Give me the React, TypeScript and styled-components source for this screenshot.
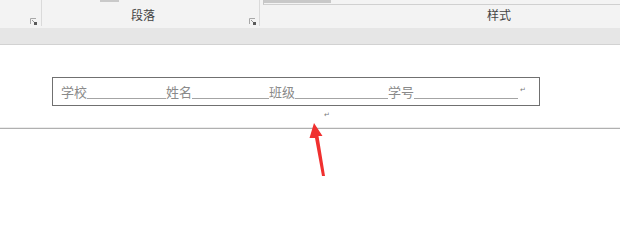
import React from 'react'
import styled, { createGlobalStyle } from 'styled-components'

const GlobalStyle = createGlobalStyle`
  html, body {
    margin: 0;
    padding: 0;
    background: #ffffff;
  }
  body {
    font-family: "Noto Sans CJK SC", "Noto Sans", sans-serif;
  }
`

const Screen = styled.div`
  position: relative;
  width: 620px;
  height: 214px;
  overflow: hidden;
  background: #ffffff;
`

const Ribbon = styled.div`
  display: flex;
  height: 28px;
  background: #f3f3f3;
`

const Group = styled.div<{ width?: number; labelLeft?: number }>`
  position: relative;
  display: flex;
  align-items: flex-end;
  ${({ width }) => (width ? `width: ${width}px;` : 'flex: 1;')}
  padding-left: ${({ labelLeft }) => labelLeft || 0}px;
  box-sizing: border-box;
`

const GroupLabel = styled.span`
  font-size: 12px;
  line-height: 14px;
  color: #444444;
  padding-bottom: 6px;
`

const Separator = styled.div`
  width: 1px;
  height: 26px;
  background: #dadada;
`

const Launcher = styled.svg<{ right: number }>`
  position: absolute;
  right: ${({ right }) => right}px;
  top: 18px;
  width: 7px;
  height: 7px;
`

const ButtonEdge = styled.div`
  position: absolute;
  left: 58px;
  top: 0;
  width: 19px;
  height: 2px;
  background: #c9c9c9;
`

const Gallery = styled.div`
  position: absolute;
  left: 3px;
  right: 0;
  top: 0;
  height: 5px;
  border-left: 1px solid #c6c6c6;
  border-bottom: 1px solid #d0d0d0;
  box-sizing: border-box;
`

const GalleryThumb = styled.div`
  width: 67px;
  height: 3px;
  background: #c8c8c8;
`

const Band = styled.div`
  height: 16px;
  background: #e6e6e6;
  border-bottom: 1px solid #d2d2d2;
`

const Page = styled.div`
  padding-top: 32px;
`

const FieldBox = styled.div`
  margin-left: 52px;
  width: 488px;
  height: 29px;
  border: 1px solid #707070;
  box-sizing: border-box;
  display: flex;
  align-items: center;
  padding-left: 8px;
  padding-top: 1px;
  color: #8a8a8a;
  font-size: 13px;
  line-height: 14px;
`

const Label = styled.span`
  white-space: nowrap;
`

const Blank = styled.span<{ width: number }>`
  display: block;
  width: ${({ width }) => width}px;
  height: 13px;
  border-bottom: 1px solid #a4a4a4;
`

const ReturnMark = styled.span`
  font-family: "DejaVu Sans", sans-serif;
  font-size: 7px;
  color: #7a7a7a;
  margin-left: 2px;
  margin-top: -4px;
`

const MarkRow = styled.div`
  height: 22px;
  display: flex;
  align-items: center;
  padding-left: 322px;
`

const Rule = styled.div`
  height: 1px;
  background: #b0b0b0;
  box-shadow: 0 -1px 0 #ececec;
`

const Arrow = styled.svg`
  position: absolute;
  left: 300px;
  top: 115px;
  width: 30px;
  height: 65px;
`

function DialogLauncher({ right }: { right: number }) {
  return (
    <Launcher right={right} viewBox="0 0 7 7">
      <path d="M0.5 6V0.5H6" fill="none" stroke="#a8a8a8" strokeWidth="1" />
      <path d="M2 2L5 5" stroke="#9a9a9a" strokeWidth="1" />
      <rect x="4" y="4" width="3" height="3" fill="#5a5a5a" />
    </Launcher>
  )
}

const fields: { label: string; blank: number }[] = [
  { label: '学校', blank: 79 },
  { label: '姓名', blank: 77 },
  { label: '班级', blank: 93 },
  { label: '学号', blank: 104 },
]

export default function App() {
  return (
    <Screen>
      <GlobalStyle />
      <Ribbon>
        <Group width={41}>
          <DialogLauncher right={4} />
        </Group>
        <Separator />
        <Group width={217} labelLeft={89}>
          <ButtonEdge />
          <GroupLabel>段落</GroupLabel>
          <DialogLauncher right={3} />
        </Group>
        <Separator />
        <Group labelLeft={227}>
          <Gallery>
            <GalleryThumb />
          </Gallery>
          <GroupLabel>样式</GroupLabel>
        </Group>
      </Ribbon>
      <Band />
      <Page>
        <FieldBox>
          {fields.map((f) => (
            <React.Fragment key={f.label}>
              <Label>{f.label}</Label>
              <Blank width={f.blank} />
            </React.Fragment>
          ))}
          <ReturnMark>↵</ReturnMark>
        </FieldBox>
        <MarkRow>
          <ReturnMark>↵</ReturnMark>
        </MarkRow>
        <Rule />
      </Page>
      <Arrow viewBox="0 0 30 65">
        <polygon
          points="14,8 22.5,21 18.5,21 25,61 22,61 15,23 9.5,23"
          fill="#f0302f"
        />
      </Arrow>
    </Screen>
  )
}
